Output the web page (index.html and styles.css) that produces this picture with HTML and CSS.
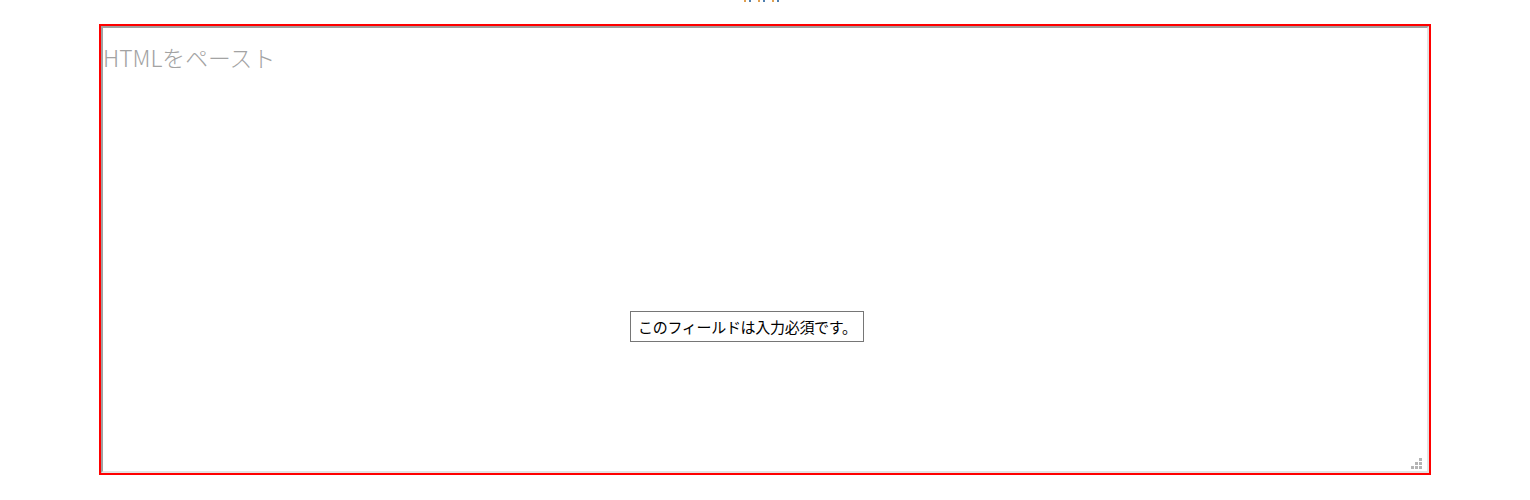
FILE: index.html
```html
<!DOCTYPE html>
<html lang="ja">
<head>
<meta charset="utf-8">
<title>HTML</title>
<link rel="stylesheet" href="styles.css">
</head>
<body>
<div class="page">
  <div class="cut-title"><span class="d1"></span><span class="d2"></span><span class="d1"></span><span class="d2"></span><span class="d1"></span><span class="d2"></span></div>
  <form class="form">
    <div class="field">
      <textarea class="input" placeholder="HTMLをペースト" required></textarea>
      <div class="grip">
        <span class="g g3"></span>
        <span class="g g2"></span><span class="g g3"></span>
        <span class="g g1"></span><span class="g g2"></span><span class="g g3"></span>
      </div>
      <div class="tip">このフィールドは入力必須です。</div>
    </div>
  </form>
</div>
</body>
</html>
```

FILE: styles.css
```css
html, body {
  margin: 0;
  padding: 0;
  background: #ffffff;
}
.page {
  position: relative;
  width: 1530px;
  height: 500px;
  overflow: hidden;
}
.cut-title {
  display: flex;
  justify-content: center;
  gap: 3px;
  height: 2px;
  padding-right: 4px;
  margin-bottom: 22px;
}
.cut-title span {
  width: 2px;
  height: 2px;
}
.cut-title .d1 { background: #e0a050; }
.cut-title .d2 { background: #5080b0; margin-right: 4px; }
.form {
  margin: 0 0 0 99px;
}
.field {
  position: relative;
  width: 1332px;
  height: 451px;
  border: 2px solid #ff0000;
  box-sizing: border-box;
}
.input {
  display: block;
  width: 100%;
  height: 100%;
  box-sizing: border-box;
  margin: 0;
  padding: 14px 0 0 0;
  border-style: solid;
  border-width: 2px;
  border-color: #a0a0a0 #e3e3e3 #e3e3e3 #a0a0a0;
  font-family: "Noto Sans CJK JP", "Open Sans", sans-serif;
  font-weight: 300;
  font-size: 22.8px;
  line-height: 32px;
  color: #333;
  resize: none;
  outline: none;
  background: #fff;
}
.input::placeholder {
  color: #a3a3a3;
}
.grip {
  position: absolute;
  right: 7px;
  bottom: 4px;
  display: grid;
  grid-template-columns: repeat(3, 3px);
  grid-template-rows: repeat(3, 3px);
  gap: 1px;
}
.g {
  width: 3px;
  height: 3px;
  background: #b4b4b4;
}
.g1 { grid-column: 1; }
.g2 { grid-column: 2; }
.g3 { grid-column: 3; }
.tip {
  position: absolute;
  left: 529px;
  top: 285px;
  height: 31px;
  box-sizing: border-box;
  padding: 0 6px 0 7px;
  border: 1px solid #767676;
  background: #fff;
  font-family: "Noto Sans CJK JP", sans-serif;
  font-size: 15px;
  letter-spacing: -0.3px;
  line-height: 29px;
  color: #000;
  white-space: nowrap;
}
```
